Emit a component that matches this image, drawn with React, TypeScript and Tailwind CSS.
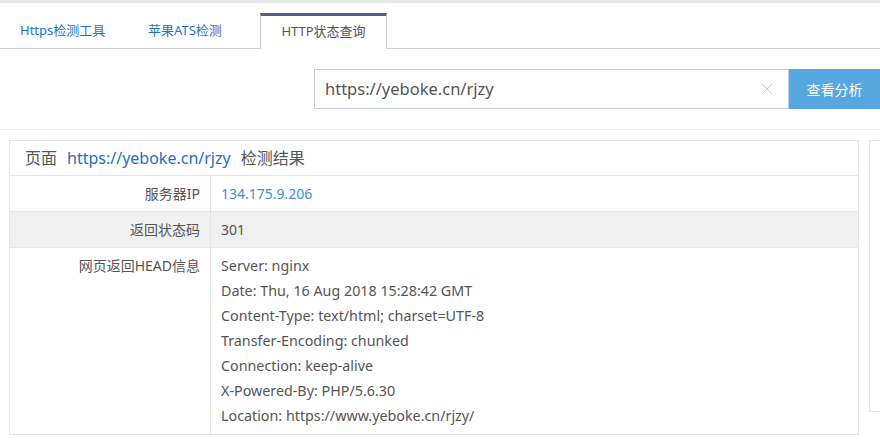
import { X } from "lucide-react"

const headLines = [
  "Server: nginx",
  "Date: Thu, 16 Aug 2018 15:28:42 GMT",
  "Content-Type: text/html; charset=UTF-8",
  "Transfer-Encoding: chunked",
  "Connection: keep-alive",
  "X-Powered-By: PHP/5.6.30",
  "Location: https://www.yeboke.cn/rjzy/",
]

export default function App() {
  return (
    <div className="h-[444px] w-[880px] overflow-hidden bg-white text-[14px] text-[#555] [font-family:'Noto_Sans','Noto_Sans_CJK_SC',sans-serif]">
      <div className="h-[3px] bg-[#e6e6e6]" />

      {/* tabs */}
      <div className="mt-[10px] flex h-[36px] border-b border-[#c6cddf] text-[13px]">
        <div className="flex w-[128px] items-center pl-5 pt-px text-[#1e76cc]">Https检测工具</div>
        <div className="flex w-[132px] items-center pl-5 pt-px text-[#1e76cc]">苹果ATS检测</div>
        <div className="-mb-px flex w-[127px] items-center justify-center border-x border-t-[3px] border-x-[#c6cddf] border-t-[#54617f] bg-white pb-[2px] text-[#555]">
          HTTP状态查询
        </div>
      </div>

      {/* search */}
      <div className="flex justify-end border-b border-[#ececec] pt-5 pb-5">
        <div className="flex h-[40px] w-[475px] items-center border border-[#c6cddf] pl-[10px] pr-[12px]">
          <span className="flex-1 text-[16.5px] text-[#555]">https://yeboke.cn/rjzy</span>
          <X className="size-[18px] text-[#bbb]" strokeWidth={1.1} />
        </div>
        <button className="h-[40px] w-[91px] bg-[#56a6e0] text-[14px] text-white">查看分析</button>
      </div>

      <div className="mt-[10px] flex gap-[10px] pl-[9px]">
        {/* result table */}
        <div className="w-[850px] shrink-0 border border-[#e5e5e5]">
          <div className="flex h-[35px] items-center gap-[10px] border-b border-[#e5e5e5] pl-[15px] text-[16px]">
            <span>页面</span>
            <span className="text-[#1e6fc0]">https://yeboke.cn/rjzy</span>
            <span>检测结果</span>
          </div>
          <div className="flex h-[36px] border-b border-[#e5e5e5]">
            <div className="flex w-[201px] items-center justify-end border-r border-[#e5e5e5] pr-[10px]">服务器IP</div>
            <div className="flex items-center pl-[10px] text-[#3b8fe0]">134.175.9.206</div>
          </div>
          <div className="flex h-[36px] border-b border-[#e5e5e5] bg-[#f0f0f0]">
            <div className="flex w-[201px] items-center justify-end border-r border-[#e5e5e5] pr-[10px]">返回状态码</div>
            <div className="flex items-center pl-[10px]">301</div>
          </div>
          <div className="flex">
            <div className="w-[201px] border-r border-[#e5e5e5] pt-[5px] pr-[10px] text-right leading-[25px]">网页返回HEAD信息</div>
            <div className="pt-[5px] pb-[6px] pl-[10px] text-[14.3px] leading-[25px]">
              {headLines.map((line) => (
                <div key={line}>{line}</div>
              ))}
            </div>
          </div>
        </div>

        {/* side panel */}
        <div className="h-[272px] w-[40px] shrink-0 border border-[#e5e5e5]" />
      </div>
    </div>
  )
}
